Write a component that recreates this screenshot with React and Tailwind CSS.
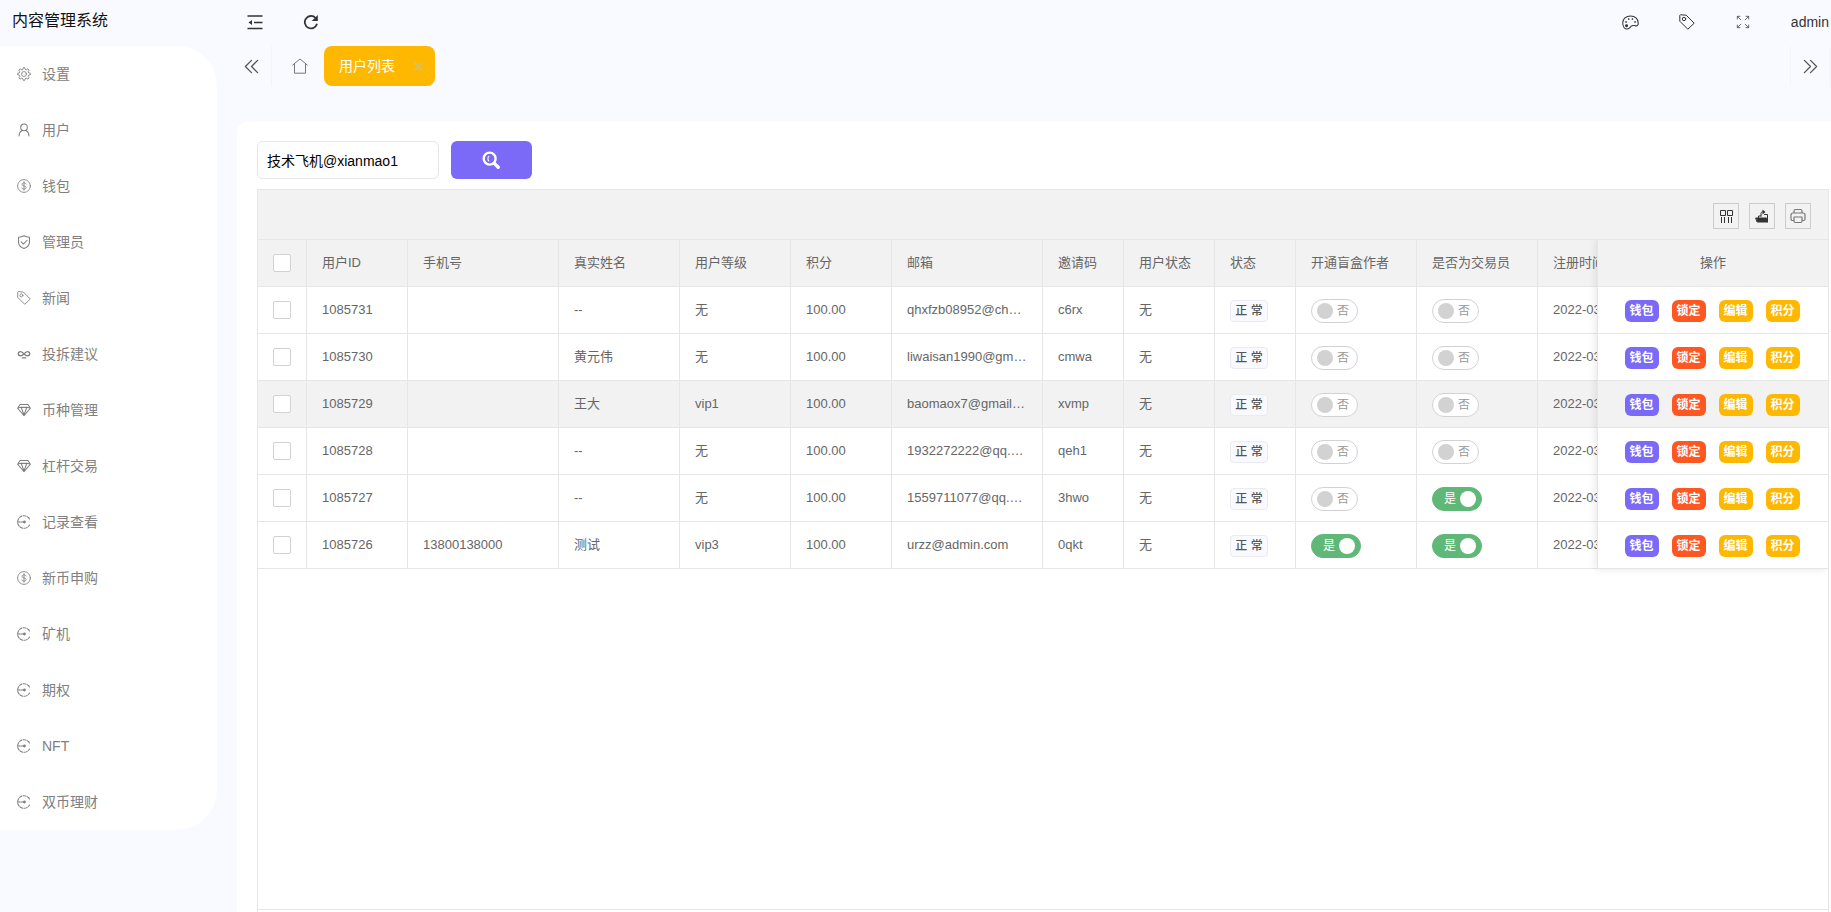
import React, { useState } from 'react';

const stroke = { fill: 'none', stroke: 'currentColor', strokeLinecap: 'round', strokeLinejoin: 'round' };

function Icon({ children, size = 14, width = 1 }) {
  return (
    <svg width={size} height={size} viewBox="0 0 16 16" strokeWidth={width} {...stroke} className="shrink-0" aria-hidden="true">
      {children}
    </svg>
  );
}

const GearIcon = () => (
  <Icon>
    <path d="M6.800 2.600L7.200.7h1.600l.4 1.900 1.500.6 1.700-1.100 1.500 1.500-1.100 1.700.6 1.500 1.900.4v1.600l-1.900.4-.6 1.500 1.100 1.700-1.500 1.500-1.700-1.100-1.500.6-.4 1.900H7.200l-.4-1.900-1.500-.6-1.700 1.100-1.500-1.500 1.100-1.700-.6-1.500L.7 8.800V7.200l1.900-.4.6-1.500-1.100-1.700 1.500-1.500 1.700 1.100z" />
    <circle cx="8" cy="8" r="2.800" />
  </Icon>
);
const UserIcon = () => (
  <Icon width={1.200}>
    <circle cx="8" cy="5" r="3.800" />
    <path d="M5.800 8.200C3.500 9.500 2.600 12 2.300 14.800M10.200 8.200c2.300 1.300 3.200 3.800 3.500 6.600" />
  </Icon>
);
const DollarIcon = () => (
  <Icon>
    <circle cx="8" cy="8" r="7.300" />
    <path d="M10.300 5.800C10 4.800 9.200 4.400 8 4.400c-1.400 0-2.300.7-2.300 1.700C5.700 8.600 10.400 7.300 10.400 9.900c0 1-1 1.700-2.400 1.700-1.300 0-2.200-.5-2.500-1.600M8 3.200v9.600" />
  </Icon>
);
const ShieldIcon = () => (
  <Icon width={1.200}>
    <path d="M8 .8c1.900 1 3.900 1.500 6.300 1.700v5.700c0 3.500-2.500 5.700-6.300 7.200C4.200 13.900 1.700 11.700 1.700 8.200V2.500C4.100 2.300 6.100 1.800 8 .8z" />
    <path d="M4.800 7.800l2.500 2.500 4.300-4.300" />
  </Icon>
);
const TagIcon = ({ size }) => (
  <Icon size={size}>
    <path d="M.8 1.800v5.400l8 8 6.400-6-8-8L1.800.8z" />
    <circle cx="5" cy="5" r="1.700" />
  </Icon>
);
const LoopIcon = () => (
  <Icon width={1.500}>
    <path d="M8 8C6.500 6 5.500 5.200 4 5.200 2.200 5.200 1.500 6.300 1.500 7.700S2.400 10 4 10c1.500 0 2.500-.5 4-2 1.500-2 2.500-2.800 4-2.800 1.800 0 2.500 1.100 2.500 2.500S13.600 10 12 10c-1.500 0-2.500-.5-4-2M6 12.500h4" />
  </Icon>
);
const DiamondIcon = () => (
  <Icon width={1.200}>
    <path d="M3.500 1.800h9L15.300 6 8 14.500.7 6zM3.500 5h9M5.200 6L8 13.500 10.800 6M.7 6l2.800-1M15.300 6l-2.800-1" />
  </Icon>
);
const EnterIcon = () => (
  <Icon width={1.200}>
    <path strokeDasharray="3.500 1.500" d="M14.300 4.600A7.200 7.200 0 1 0 14.300 11.400" />
    <path d="M.5 8h7" />
    <circle cx="8.500" cy="8" r="1" fill="currentColor" />
  </Icon>
);

const menu = [
  { label: '设置', icon: GearIcon },
  { label: '用户', icon: UserIcon },
  { label: '钱包', icon: DollarIcon },
  { label: '管理员', icon: ShieldIcon },
  { label: '新闻', icon: TagIcon },
  { label: '投拆建议', icon: LoopIcon },
  { label: '币种管理', icon: DiamondIcon },
  { label: '杠杆交易', icon: DiamondIcon },
  { label: '记录查看', icon: EnterIcon },
  { label: '新币申购', icon: DollarIcon },
  { label: '矿机', icon: EnterIcon },
  { label: '期权', icon: EnterIcon },
  { label: 'NFT', icon: EnterIcon },
  { label: '双币理财', icon: EnterIcon },
];

const columns = [
  { title: '用户ID', key: 'id', width: 'w-[101px]' },
  { title: '手机号', key: 'phone', width: 'w-[151px]' },
  { title: '真实姓名', key: 'name', width: 'w-[121px]' },
  { title: '用户等级', key: 'level', width: 'w-[111px]' },
  { title: '积分', key: 'points', width: 'w-[101px]' },
  { title: '邮箱', key: 'email', width: 'w-[151px]' },
  { title: '邀请码', key: 'code', width: 'w-[81px]' },
  { title: '用户状态', key: 'state', width: 'w-[91px]' },
  { title: '状态', key: 'status', width: 'w-[81px]' },
  { title: '开通盲盒作者', key: 'author', width: 'w-[121px]' },
  { title: '是否为交易员', key: 'trader', width: 'w-[121px]' },
  { title: '注册时间', key: 'time', width: 'w-[161px]' },
];

const initialUsers = [
  { id: '1085731', phone: '', name: '--', level: '无', email: 'qhxfzb08952@chacuo.net', code: 'c6rx', author: false, trader: false },
  { id: '1085730', phone: '', name: '黄元伟', level: '无', email: 'liwaisan1990@gmail.com', code: 'cmwa', author: false, trader: false },
  { id: '1085729', phone: '', name: '王大', level: 'vip1', email: 'baomaox7@gmail.com', code: 'xvmp', author: false, trader: false, active: true },
  { id: '1085728', phone: '', name: '--', level: '无', email: '1932272222@qq.com', code: 'qeh1', author: false, trader: false },
  { id: '1085727', phone: '', name: '--', level: '无', email: '1559711077@qq.com', code: '3hwo', author: false, trader: true },
  { id: '1085726', phone: '13800138000', name: '测试', level: 'vip3', email: 'urzz@admin.com', code: '0qkt', author: true, trader: true },
];

const actions = [
  { label: '钱包', color: 'bg-[#7b6af7]' },
  { label: '锁定', color: 'bg-[#ff5722]' },
  { label: '编辑', color: 'bg-[#ffb800]' },
  { label: '积分', color: 'bg-[#ffb800]' },
];

function Switch({ checked, onChange, label }) {
  return (
    <label className={`relative flex h-6 cursor-pointer items-center gap-1 rounded-full border px-[5px] text-xs ${
      checked ? 'w-[50px] flex-row-reverse border-[#5fb878] bg-[#5fb878] text-white' : 'w-[47px] border-[#d2d2d2] bg-white text-[#999]'
    }`}>
      <input type="checkbox" role="switch" aria-label={label} checked={checked} onChange={onChange} className="sr-only" />
      <span className={`size-4 rounded-full ${checked ? 'bg-white' : 'bg-[#d2d2d2]'}`} />
      <span>{checked ? '是' : '否'}</span>
    </label>
  );
}

function Checkbox({ label }) {
  return (
    <input type="checkbox" aria-label={label}
      className="mx-auto block size-[18px] appearance-none rounded-xs border border-[#d2d2d2] bg-white checked:border-[#5fb878] checked:bg-[#5fb878]" />
  );
}

function Cell({ column, user, onToggle }) {
  switch (column.key) {
    case 'points':
      return '100.00';
    case 'state':
      return '无';
    case 'status':
      return (
        <div className="pt-0.5">
          <span className="flex h-[22px] w-[38px] items-center justify-center rounded border border-[#e9ebf0] bg-[#f9faff] text-xs font-medium text-[#555]">正 常</span>
        </div>
      );
    case 'author':
    case 'trader':
      return (
        <div className="pt-0.5">
          <Switch checked={user[column.key]} label={column.title} onChange={() => onToggle(user.id, column.key)} />
        </div>
      );
    case 'time':
      return '2022-03';
    default:
      return user[column.key];
  }
}

function Sidebar() {
  return (
    <aside className="w-[217px] shrink-0">
      <h1 className="flex h-[46px] items-center px-3 pb-1 text-base text-[#111]">内容管理系统</h1>
      <nav className="rounded-r-[40px] bg-white">
        {menu.map(({ label, icon: MenuIcon }) => (
          <a key={label} href="#" className="flex h-14 items-center gap-[11px] pl-[17px] text-sm text-[#808080] hover:text-[#333]">
            <MenuIcon />
            {label}
          </a>
        ))}
      </nav>
    </aside>
  );
}

function TopBar() {
  return (
    <header className="flex h-[46px] items-center justify-between pb-0.5 pl-[10px] text-[#333]">
      <div className="flex">
        <button aria-label="收起菜单" className="flex w-14 justify-center">
          <Icon size={16} width={1.5}>
            <path strokeLinecap="butt" d="M.5 2h15M7 8.500h8.500M.5 14.500h15" />
            <path d="M5 6v5L1.500 8.500z" fill="currentColor" stroke="none" />
          </Icon>
        </button>
        <button aria-label="刷新" className="flex w-14 justify-center">
          <Icon size={16} width={1.800}>
            <path strokeLinecap="butt" d="M12.600 4A6.200 6.200 0 1 0 14 9.800" />
            <path d="M14.800 1v6H8.800z" fill="currentColor" stroke="none" />
          </Icon>
        </button>
      </div>
      <div className="flex items-center">
        <button aria-label="主题" className="flex w-14 justify-center">
          <Icon size={17}>
            <path d="M8 1.800C3.800 1.800.7 4.700.7 8.300c0 3.500 1.800 5.900 4.100 5.900 2.300 0 2.800-1.600 3.900-2.700 1.200-1.200 2.200-.8 3.600-.5 1.700.4 3 .2 3-2.400C15.300 4.700 12.200 1.800 8 1.800z" />
            <circle cx="4.300" cy="11" r=".9" fill="currentColor" />
            <circle cx="3.800" cy="7.500" r=".3" fill="currentColor" />
            <circle cx="6.300" cy="4.800" r=".3" fill="currentColor" />
            <circle cx="9.800" cy="4.800" r=".3" fill="currentColor" />
            <circle cx="12.300" cy="7.500" r=".3" fill="currentColor" />
          </Icon>
        </button>
        <button aria-label="标签" className="flex w-14 justify-center">
          <TagIcon size={16} />
        </button>
        <button aria-label="全屏" className="flex w-14 justify-center text-[#555]">
          <Icon size={14}>
            <path d="M1.500 4.500v-3h3M1.500 1.500L5.500 5.500M11.500 1.500h3v3M14.500 1.500l-4 4M1.500 11.500v3h3M1.500 14.500l4-4M11.500 14.500h3v-3M14.500 14.500l-4-4" />
          </Icon>
        </button>
        <a href="#" className="pr-0.5 pl-5 text-sm">admin</a>
      </div>
    </header>
  );
}

function TabBar() {
  return (
    <div className="flex h-10 items-stretch pr-px pl-[15px] text-[#555]">
      <button aria-label="向左" className="flex w-10 items-center justify-center border-r border-[#f4f4f6]">
        <Icon size={15} width={1.400}>
          <path d="M8 1.500L1.500 8 8 14.500M14.500 1.500L8 8l6.500 6.500" />
        </Icon>
      </button>
      <a href="#" aria-label="首页" className="ml-1 flex w-12 items-center justify-center text-[#777]">
        <Icon size={16}>
          <path d="M.7 7L8 1l7.300 6M2.500 6v9.200h11V6" />
        </Icon>
      </a>
      <div className="flex w-[111px] items-center justify-between rounded-lg bg-[#ffb800] pr-3 pl-[15px] text-sm text-white">
        <span>用户列表</span>
        <button aria-label="关闭" className="text-[#c2c2a8]">
          <Icon size={9}>
            <path d="M1.500 1.500l13 13M14.500 1.500l-13 13" strokeWidth="1.800" />
          </Icon>
        </button>
      </div>
      <button aria-label="向右" className="ml-auto flex w-10 items-center justify-center border-x border-[#f4f4f6]">
        <Icon size={15} width={1.400}>
          <path d="M1.500 1.500L8 8l-6.500 6.500M8 1.500L14.500 8 8 14.500" />
        </Icon>
      </button>
    </div>
  );
}

function TableTools() {
  const style = 'flex size-[26px] items-center justify-center border border-[#ccc]';
  return (
    <div className="flex h-[50px] items-center justify-end gap-[10px] border-b border-[#e6e6e6] bg-[#f2f2f2] pt-0.5 pr-[17px]">
      <button aria-label="筛选列" className={`${style} text-[#333]`}>
        <Icon size={16}>
          <path strokeLinecap="butt" strokeLinejoin="miter" d="M2.500 2.500h5v5h-5zM9.500 2.500h5v5h-5zM3.500 9v6M6.500 9v6M10.500 9v6M13.500 9v6" />
        </Icon>
      </button>
      <button aria-label="导出" className={`${style} text-[#333]`}>
        <Icon size={16}>
          <path d="M2 10h10.500l1 4H3.500z" fill="currentColor" />
          <path d="M4.500 9.500V8h2.500M10.500 6.500h3V14M7 8V5.500C7 4 8 3.800 9.500 3.800" />
          <path d="M8.500 1.500L11.500 4 8.500 6.500z" fill="currentColor" stroke="none" />
        </Icon>
      </button>
      <button aria-label="打印" className={`${style} text-[#777]`}>
        <Icon size={16} width={1.200}>
          <path d="M4 5V3c0-.9.600-1.500 1.500-1.500h5c.9 0 1.500.6 1.500 1.500v2M4 12.500H2.500C1.600 12.500 1 11.900 1 11V7c0-1.200.8-2 2-2h10c1.200 0 2 .8 2 2v4c0 .9-.6 1.500-1.500 1.500H12M4 9h8v4c0 .9-.6 1.500-1.500 1.500h-5C4.600 14.500 4 13.900 4 13z" />
        </Icon>
      </button>
    </div>
  );
}

const th = 'h-[47px] border-r border-b border-[#e6e6e6] bg-[#f2f2f2] font-normal';
const td = 'h-[47px] border-r border-b border-[#e6e6e6]';

function UserTable({ users, onToggle }) {
  return (
    <div className="flex items-start overflow-hidden pb-3 text-[13px] leading-5 text-[#666]">
      <div className="min-w-0 flex-1 overflow-hidden">
        <table className="w-[1392px] table-fixed border-separate border-spacing-0 text-left">
          <thead>
            <tr>
              <th className={`${th} w-[49px]`}><Checkbox label="全选" /></th>
              {columns.map(c => <th key={c.key} className={`${th} ${c.width} px-[15px]`}>{c.title}</th>)}
            </tr>
          </thead>
          <tbody>
            {users.map(user => (
              <tr key={user.id} className={user.active ? 'bg-[#f2f2f2]' : 'bg-white'}>
                <td className={td}><Checkbox label={user.id} /></td>
                {columns.map(c => (
                  <td key={c.key} className={`${td} truncate px-[15px]`}>
                    <Cell column={c} user={user} onToggle={onToggle} />
                  </td>
                ))}
              </tr>
            ))}
          </tbody>
        </table>
      </div>

      {/* fixed action column */}
      <div className="relative w-[231px] shrink-0 border-l border-[#e6e6e6] shadow-[-1px_0_8px_rgba(0,0,0,0.1)]">
        <table className="w-full table-fixed border-separate border-spacing-0">
          <thead>
            <tr><th className="h-[47px] border-b border-[#e6e6e6] bg-[#f2f2f2] font-normal">操作</th></tr>
          </thead>
          <tbody>
            {users.map(user => (
              <tr key={user.id} className={user.active ? 'bg-[#f2f2f2]' : 'bg-white'}>
                <td className="h-[47px] border-b border-[#e6e6e6] pt-0.5 pr-0.5">
                  <div className="flex justify-center gap-[13px]">
                    {actions.map(({ label, color }) => (
                      <button key={label} className={`h-[22px] w-[34px] rounded-md text-xs font-bold text-white ${color}`}>{label}</button>
                    ))}
                  </div>
                </td>
              </tr>
            ))}
          </tbody>
        </table>
      </div>
    </div>
  );
}

export default function App() {
  const [users, setUsers] = useState(initialUsers);
  const [keyword, setKeyword] = useState('技术飞机@xianmao1');

  const handleToggle = (id, key) => {
    setUsers(users.map(u => (u.id === id ? { ...u, [key]: !u[key] } : u)));
  };

  return (
    <div className="flex h-screen overflow-hidden bg-[#f9faff] font-['Liberation_Sans','Noto_Sans_CJK_SC',sans-serif]">
      <Sidebar />
      <div className="flex min-w-0 flex-1 flex-col">
        <TopBar />
        <TabBar />
        <main className="mt-[35px] ml-5 flex flex-1 flex-col rounded-tl-xl bg-white pt-5 pr-0.5 pl-5">
          <form className="mb-[10px] flex gap-3" onSubmit={e => e.preventDefault()}>
            <input aria-label="关键词" value={keyword} onChange={e => setKeyword(e.target.value)}
              className="h-[38px] w-[182px] rounded-md border border-[#e6e6e6] bg-white px-[9px] text-sm text-black outline-none" />
            <button type="submit" aria-label="搜索" className="flex h-[38px] w-[81px] items-center justify-center rounded-md bg-[#7b6af7] pr-0.5 text-white">
              <Icon size={18} width={2.100}>
                <circle cx="6.800" cy="6.800" r="5.300" />
                <path d="M11.200 11.200l3.200 3.200" strokeWidth="3" />
                <path d="M6 4.800c-1 1-1 3 0 4" strokeWidth="1" />
              </Icon>
            </button>
          </form>
          <section className="flex flex-1 flex-col border-x border-t border-[#e6e6e6]">
            <TableTools />
            <div className="flex-1">
              <UserTable users={users} onToggle={handleToggle} />
            </div>
            <div className="h-[3px] border-t border-[#e6e6e6]" />
          </section>
        </main>
      </div>
    </div>
  );
}
